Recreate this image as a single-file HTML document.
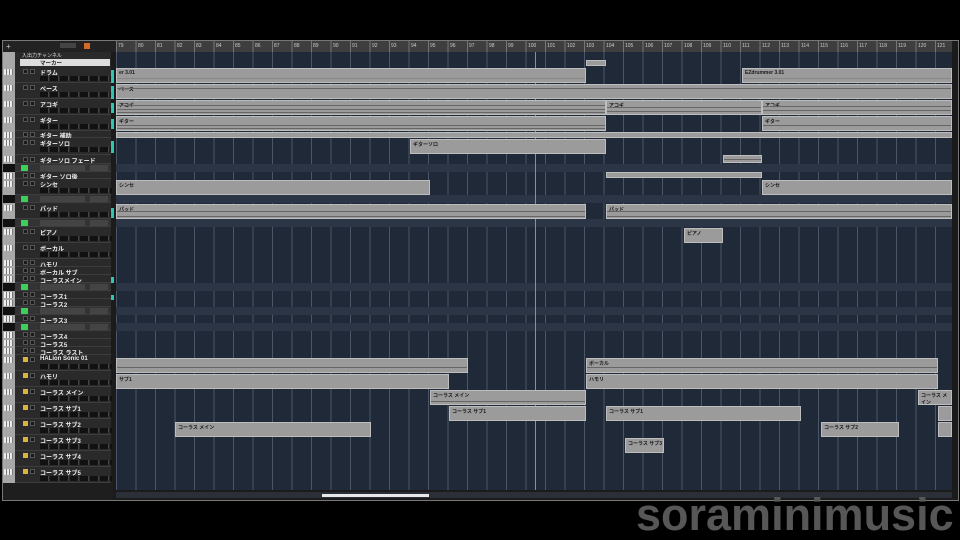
<!DOCTYPE html>
<html><head><meta charset="utf-8"><style>
*{margin:0;padding:0;box-sizing:border-box}
html{width:960px;height:540px;overflow:hidden}
body{width:960px;height:540px;background:#000;position:relative;overflow:hidden;font-family:"Liberation Sans","Noto Sans CJK JP",sans-serif}
.win{position:absolute;left:2px;top:40px;width:957px;height:461px;background:#1b1b1b;border:1px solid #777}
.ruler{position:absolute;left:116px;top:41px;width:836px;height:11px;background:#3e3e3e;background-image:repeating-linear-gradient(90deg,#777 0 1px,transparent 1px 19.5px)}
.ruler span{position:absolute;top:2px;font-size:5px;color:#ccc}
.arr{position:absolute;left:116px;top:52px;width:836px;height:438px;background:#1f2937;background-image:repeating-linear-gradient(90deg,#4a5567 0 1px,transparent 1px 19.5px)}
.lane{position:absolute;left:116px;width:836px;background:#2b3545}
.c{position:absolute;background:#9b9b9b;border:1px solid #bdbdbd;overflow:hidden}
.c i{position:absolute;left:0;right:0;height:1px;background:#666}
.c b{position:absolute;left:2px;top:1px;font-size:5px;color:#1a1a1a;font-weight:bold}
.left{position:absolute;left:3px;top:52px;width:12px;height:431px;background:#a8a8a8}
.list{position:absolute;left:15px;top:52px;width:96px;height:431px;background:#2a2a2a}
.tr{position:absolute;left:15px;width:96px;border-bottom:1px solid #3d3d3d;background:#2a2a2a}
.tr .n{position:absolute;left:25px;top:1px;font-size:6px;color:#eee;font-weight:bold;white-space:nowrap}
.tr .b{position:absolute;top:2px;width:5px;height:5px;background:#1a1a1a;border:1px solid #555}
.tr .y{background:#d9b43a;border-color:#d9b43a}
.tr .r2{position:absolute;left:25px;top:9px;width:72px;height:5px;background:repeating-linear-gradient(90deg,#111 0 8px,#444 8px 9px,#2a2a2a 9px 10px)}
.sub{background:#333}
.g{position:absolute;left:6px;top:1px;width:7px;height:6px;background:#3ecf5a}
.sub .s{position:absolute;left:25px;top:1px;width:45px;height:6px;background:#444}
.sub .s2{position:absolute;left:75px;top:1px;width:18px;height:6px;background:#444}
.meter{position:absolute;left:111px;width:3px;background:#2fc4b4}
.pi{position:absolute;left:4px;width:9px;height:6px;background:#eee;background-image:repeating-linear-gradient(90deg,#eee 0 2px,#777 2px 3px)}
.wm{position:absolute;left:636px;top:492px;font-size:45px;font-weight:bold;color:#575757;line-height:1}
</style></head><body>
<div class="win"></div>
<div style="position:absolute;left:3px;top:41px;width:113px;height:11px;background:#222"></div>
<div style="position:absolute;left:84px;top:43px;width:6px;height:6px;background:#d46a2a"></div>
<div style="position:absolute;left:60px;top:43px;width:16px;height:5px;background:#444"></div>
<div style="position:absolute;left:6px;top:43px;font-size:8px;color:#ccc;line-height:1">+</div>
<div class="ruler">
<span style="left:2px">79</span><span style="left:22px">80</span><span style="left:41px">81</span><span style="left:61px">82</span><span style="left:80px">83</span><span style="left:100px">84</span><span style="left:119px">85</span><span style="left:139px">86</span><span style="left:158px">87</span><span style="left:178px">88</span><span style="left:197px">89</span><span style="left:217px">90</span><span style="left:236px">91</span><span style="left:256px">92</span><span style="left:275px">93</span><span style="left:295px">94</span><span style="left:314px">95</span><span style="left:334px">96</span><span style="left:353px">97</span><span style="left:373px">98</span><span style="left:392px">99</span><span style="left:412px">100</span><span style="left:431px">101</span><span style="left:451px">102</span><span style="left:470px">103</span><span style="left:490px">104</span><span style="left:509px">105</span><span style="left:529px">106</span><span style="left:548px">107</span><span style="left:568px">108</span><span style="left:587px">109</span><span style="left:607px">110</span><span style="left:626px">111</span><span style="left:646px">112</span><span style="left:665px">113</span><span style="left:685px">114</span><span style="left:704px">115</span><span style="left:724px">116</span><span style="left:743px">117</span><span style="left:763px">118</span><span style="left:782px">119</span><span style="left:802px">120</span><span style="left:821px">121</span>
</div>
<div class="arr"></div>
<div class="lane" style="top:164px;height:8px"></div>
<div class="lane" style="top:195px;height:8px"></div>
<div class="lane" style="top:219px;height:8px"></div>
<div class="lane" style="top:283px;height:8px"></div>
<div class="lane" style="top:307px;height:8px"></div>
<div class="lane" style="top:323px;height:8px"></div>
<div style="position:absolute;left:535px;top:52px;width:1px;height:438px;background:#8a8f99"></div>

<div class="c" style="left:586px;top:60px;width:20px;height:6px"></div>
<div class="c" style="left:116px;top:68px;width:470px;height:15px"><b>er 3.01</b><i style="top:9px;background:#888"></i></div>
<div class="c" style="left:742px;top:68px;width:210px;height:15px"><b>EZdrummer 3.01</b><i style="top:9px;background:#888"></i></div>
<div class="c" style="left:116px;top:84px;width:836px;height:15px"><b>ベース</b><i style="top:3px"></i></div>
<div class="c" style="left:116px;top:100px;width:490px;height:15px"><b>アコギ</b><i style="top:4px"></i><i style="top:8px"></i><i style="top:11px"></i></div>
<div class="c" style="left:606px;top:100px;width:156px;height:15px"><b>アコギ</b><i style="top:6px"></i><i style="top:10px"></i></div>
<div class="c" style="left:762px;top:100px;width:190px;height:15px"><b>アコギ</b><i style="top:5px"></i><i style="top:9px"></i></div>
<div class="c" style="left:116px;top:116px;width:490px;height:15px"><b>ギター</b><i style="top:8px"></i><i style="top:11px"></i></div>
<div class="c" style="left:762px;top:116px;width:190px;height:15px"><b>ギター</b><i style="top:8px"></i></div>
<div class="c" style="left:116px;top:132px;width:836px;height:6px"></div>
<div class="c" style="left:410px;top:139px;width:196px;height:15px"><b>ギターソロ</b></div>
<div class="c" style="left:723px;top:155px;width:39px;height:8px"><i style="top:3px"></i></div>
<div class="c" style="left:606px;top:172px;width:156px;height:6px"></div>
<div class="c" style="left:116px;top:180px;width:314px;height:15px"><b>シンセ</b></div>
<div class="c" style="left:762px;top:180px;width:190px;height:15px"><b>シンセ</b></div>
<div class="c" style="left:116px;top:204px;width:470px;height:15px"><b>パッド</b><i style="top:6px"></i><i style="top:11px"></i></div>
<div class="c" style="left:606px;top:204px;width:346px;height:15px"><b>パッド</b><i style="top:6px"></i><i style="top:11px"></i></div>
<div class="c" style="left:684px;top:228px;width:39px;height:15px"><b>ピアノ</b></div>
<div class="c" style="left:116px;top:358px;width:352px;height:15px"><i style="top:8px"></i></div>
<div class="c" style="left:586px;top:358px;width:352px;height:15px"><b>ボーカル</b><i style="top:8px"></i></div>
<div class="c" style="left:116px;top:374px;width:333px;height:15px"><b>サブ1</b></div>
<div class="c" style="left:586px;top:374px;width:352px;height:15px"><b>ハモリ</b></div>
<div class="c" style="left:430px;top:390px;width:156px;height:15px"><b>コーラス メイン</b><i style="top:10px"></i></div>
<div class="c" style="left:918px;top:390px;width:34px;height:15px"><b>コーラス メイン</b></div>
<div class="c" style="left:449px;top:406px;width:137px;height:15px"><b>コーラス サブ1</b></div>
<div class="c" style="left:606px;top:406px;width:195px;height:15px"><b>コーラス サブ1</b></div>
<div class="c" style="left:938px;top:406px;width:14px;height:15px"></div>
<div class="c" style="left:175px;top:422px;width:196px;height:15px"><b>コーラス メイン</b></div>
<div class="c" style="left:821px;top:422px;width:78px;height:15px"><b>コーラス サブ2</b></div>
<div class="c" style="left:938px;top:422px;width:14px;height:15px"></div>
<div class="c" style="left:625px;top:438px;width:39px;height:15px"><b>コーラス サブ3</b></div>
<div style="position:absolute;left:116px;top:492px;width:836px;height:6px;background:#2a2f38"></div>
<div style="position:absolute;left:322px;top:494px;width:107px;height:3px;background:#e8e8e8"></div>
<div style="position:absolute;left:952px;top:52px;width:6px;height:438px;background:#1a1a1a"></div>

<div class="left"></div>
<div class="list"></div>
<div style="position:absolute;left:20px;top:59px;width:90px;height:7px;background:#ddd"></div>
<div style="position:absolute;left:40px;top:59px;font-size:5.5px;color:#222;font-weight:bold">マーカー</div>
<div style="position:absolute;left:22px;top:52px;font-size:5px;color:#ddd">入出力チャンネル</div>

<div class="tr" style="top:67px;height:16px"><div class="b" style="left:8px"></div><div class="b" style="left:15px"></div><div class="n">ドラム</div><div class="r2"></div></div>
<div class="tr" style="top:83px;height:16px"><div class="b" style="left:8px"></div><div class="b" style="left:15px"></div><div class="n">ベース</div><div class="r2"></div></div>
<div class="tr" style="top:99px;height:16px"><div class="b" style="left:8px"></div><div class="b" style="left:15px"></div><div class="n">アコギ</div><div class="r2"></div></div>
<div class="tr" style="top:115px;height:16px"><div class="b" style="left:8px"></div><div class="b" style="left:15px"></div><div class="n">ギター</div><div class="r2"></div></div>
<div class="tr" style="top:131px;height:7px"><div class="b" style="left:8px;top:1px"></div><div class="b" style="left:15px;top:1px"></div><div class="n" style="top:0">ギター 補助</div></div>
<div class="tr" style="top:138px;height:17px"><div class="b" style="left:8px"></div><div class="b" style="left:15px"></div><div class="n">ギターソロ</div><div class="r2"></div></div>
<div class="tr" style="top:155px;height:9px"><div class="b" style="left:8px"></div><div class="b" style="left:15px"></div><div class="n">ギターソロ フェード</div></div>
<div class="tr sub" style="top:164px;height:8px"><div class="g"></div><div class="s"></div><div class="s2"></div></div>
<div class="tr" style="top:172px;height:7px"><div class="b" style="left:8px;top:1px"></div><div class="b" style="left:15px;top:1px"></div><div class="n" style="top:0">ギター ソロ後</div></div>
<div class="tr" style="top:179px;height:16px"><div class="b" style="left:8px"></div><div class="b" style="left:15px"></div><div class="n">シンセ</div><div class="r2"></div></div>
<div class="tr sub" style="top:195px;height:8px"><div class="g"></div><div class="s"></div><div class="s2"></div></div>
<div class="tr" style="top:203px;height:16px"><div class="b" style="left:8px"></div><div class="b" style="left:15px"></div><div class="n">パッド</div><div class="r2"></div></div>
<div class="tr sub" style="top:219px;height:8px"><div class="g"></div><div class="s"></div><div class="s2"></div></div>
<div class="tr" style="top:227px;height:16px"><div class="b" style="left:8px"></div><div class="b" style="left:15px"></div><div class="n">ピアノ</div><div class="r2"></div></div>
<div class="tr" style="top:243px;height:16px"><div class="b" style="left:8px"></div><div class="b" style="left:15px"></div><div class="n">ボーカル</div><div class="r2"></div></div>
<div class="tr" style="top:259px;height:8px"><div class="b" style="left:8px;top:1px"></div><div class="b" style="left:15px;top:1px"></div><div class="n">ハモリ</div></div>
<div class="tr" style="top:267px;height:8px"><div class="b" style="left:8px;top:1px"></div><div class="b" style="left:15px;top:1px"></div><div class="n">ボーカル サブ</div></div>
<div class="tr" style="top:275px;height:8px"><div class="b" style="left:8px;top:1px"></div><div class="b" style="left:15px;top:1px"></div><div class="n">コーラスメイン</div></div>
<div class="tr sub" style="top:283px;height:8px"><div class="g"></div><div class="s"></div><div class="s2"></div></div>
<div class="tr" style="top:291px;height:8px"><div class="b" style="left:8px;top:1px"></div><div class="b" style="left:15px;top:1px"></div><div class="n">コーラス1</div></div>
<div class="tr" style="top:299px;height:8px"><div class="b" style="left:8px;top:1px"></div><div class="b" style="left:15px;top:1px"></div><div class="n">コーラス2</div></div>
<div class="tr sub" style="top:307px;height:8px"><div class="g"></div><div class="s"></div><div class="s2"></div></div>
<div class="tr" style="top:315px;height:8px"><div class="b" style="left:8px;top:1px"></div><div class="b" style="left:15px;top:1px"></div><div class="n">コーラス3</div></div>
<div class="tr sub" style="top:323px;height:8px"><div class="g"></div><div class="s"></div><div class="s2"></div></div>
<div class="tr" style="top:331px;height:8px"><div class="b" style="left:8px;top:1px"></div><div class="b" style="left:15px;top:1px"></div><div class="n">コーラス4</div></div>
<div class="tr" style="top:339px;height:8px"><div class="b" style="left:8px;top:1px"></div><div class="b" style="left:15px;top:1px"></div><div class="n">コーラス5</div></div>
<div class="tr" style="top:347px;height:8px"><div class="b" style="left:8px;top:1px"></div><div class="b" style="left:15px;top:1px"></div><div class="n">コーラス ラスト</div></div>
<div class="tr" style="top:355px;height:16px"><div class="b y" style="left:8px"></div><div class="b" style="left:15px"></div><div class="n">HALion Sonic 01</div><div class="r2"></div></div>
<div class="tr" style="top:371px;height:16px"><div class="b y" style="left:8px"></div><div class="b" style="left:15px"></div><div class="n">ハモリ</div><div class="r2"></div></div>
<div class="tr" style="top:387px;height:16px"><div class="b y" style="left:8px"></div><div class="b" style="left:15px"></div><div class="n">コーラス メイン</div><div class="r2"></div></div>
<div class="tr" style="top:403px;height:16px"><div class="b y" style="left:8px"></div><div class="b" style="left:15px"></div><div class="n">コーラス サブ1</div><div class="r2"></div></div>
<div class="tr" style="top:419px;height:16px"><div class="b y" style="left:8px"></div><div class="b" style="left:15px"></div><div class="n">コーラス サブ2</div><div class="r2"></div></div>
<div class="tr" style="top:435px;height:16px"><div class="b y" style="left:8px"></div><div class="b" style="left:15px"></div><div class="n">コーラス サブ3</div><div class="r2"></div></div>
<div class="tr" style="top:451px;height:16px"><div class="b y" style="left:8px"></div><div class="b" style="left:15px"></div><div class="n">コーラス サブ4</div><div class="r2"></div></div>
<div class="tr" style="top:467px;height:16px"><div class="b y" style="left:8px"></div><div class="b" style="left:15px"></div><div class="n">コーラス サブ5</div><div class="r2"></div></div>
<div style="position:absolute;left:3px;top:483px;width:110px;height:17px;background:#1e1e1e"></div>

<div class="pi" style="top:69px"></div><div class="pi" style="top:85px"></div><div class="pi" style="top:101px"></div><div class="pi" style="top:117px"></div><div class="pi" style="top:132px"></div><div class="pi" style="top:140px"></div><div class="pi" style="top:156px"></div><div class="pi" style="top:173px"></div><div class="pi" style="top:181px"></div><div class="pi" style="top:205px"></div><div class="pi" style="top:229px"></div><div class="pi" style="top:245px"></div><div class="pi" style="top:260px"></div><div class="pi" style="top:268px"></div><div class="pi" style="top:276px"></div><div class="pi" style="top:292px"></div><div class="pi" style="top:300px"></div><div class="pi" style="top:316px"></div><div class="pi" style="top:332px"></div><div class="pi" style="top:340px"></div><div class="pi" style="top:348px"></div><div class="pi" style="top:357px"></div><div class="pi" style="top:373px"></div><div class="pi" style="top:389px"></div><div class="pi" style="top:405px"></div><div class="pi" style="top:421px"></div><div class="pi" style="top:437px"></div><div class="pi" style="top:453px"></div><div class="pi" style="top:469px"></div>
<div style="position:absolute;left:3px;top:164px;width:12px;height:8px;background:#111"></div>
<div style="position:absolute;left:3px;top:195px;width:12px;height:8px;background:#111"></div>
<div style="position:absolute;left:3px;top:219px;width:12px;height:8px;background:#111"></div>
<div style="position:absolute;left:3px;top:283px;width:12px;height:8px;background:#111"></div>
<div style="position:absolute;left:3px;top:307px;width:12px;height:8px;background:#111"></div>
<div style="position:absolute;left:3px;top:323px;width:12px;height:8px;background:#111"></div>

<div class="meter" style="top:70px;height:13px"></div>
<div class="meter" style="top:86px;height:13px"></div>
<div class="meter" style="top:103px;height:10px"></div>
<div class="meter" style="top:119px;height:10px"></div>
<div class="meter" style="top:141px;height:12px"></div>
<div class="meter" style="top:208px;height:10px"></div>
<div class="meter" style="top:277px;height:6px"></div>
<div class="meter" style="top:295px;height:5px"></div>

<div class="wm">soraminimusic</div>
</body></html>
